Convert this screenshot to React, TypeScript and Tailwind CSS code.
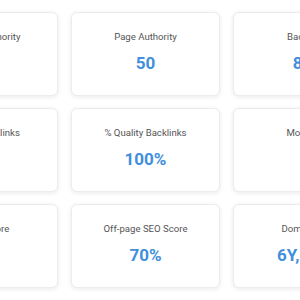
const stats = [
  { label: "Domain Authority", value: "47" },
  { label: "Page Authority", value: "50" },
  { label: "Backlinks", value: "856" },
  { label: "Quality Backlinks", value: "9" },
  { label: "% Quality Backlinks", value: "100%" },
  { label: "Moz Rank", value: "3" },
  { label: "Spam Score", value: "1%" },
  { label: "Off-page SEO Score", value: "70%" },
  { label: "Domain Age", value: "6Y, 10M" },
];

function StatCard({ label, value }: { label: string; value: string }) {
  return (
    <div className="flex h-[84px] flex-col items-center rounded-[6px] border border-[#ececec] bg-white pt-[18px] shadow-[0_1px_5px_rgba(0,0,0,0.09)]">
      <div className="whitespace-nowrap text-[9.6px] leading-[12px] text-[#555]">{label}</div>
      <div className="mt-[10px] whitespace-nowrap text-[17px] font-bold leading-[20px] text-[#3f8fdc]">
        {value}
      </div>
    </div>
  );
}

export default function App() {
  return (
    <div className="h-[300px] w-[300px] overflow-hidden bg-white font-['Roboto',sans-serif]">
      <div className="ml-[-91px] grid w-[473px] grid-cols-[149px_149px_149px] gap-x-[13px] gap-y-[12px] pt-[12px]">
        {stats.map((s) => (
          <StatCard key={s.label} label={s.label} value={s.value} />
        ))}
      </div>
    </div>
  );
}
